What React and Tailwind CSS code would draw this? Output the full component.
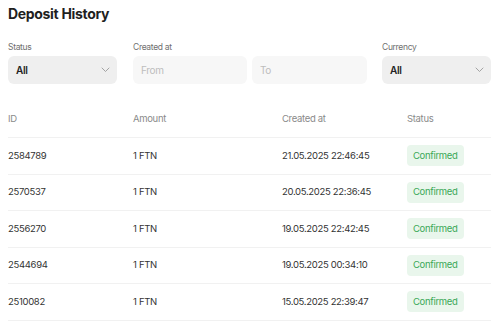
import { useState } from "react";

const rows = [
    { id: "2584789", amount: "1 FTN", created: "21.05.2025 22:46:45", status: "Confirmed" },
    { id: "2570537", amount: "1 FTN", created: "20.05.2025 22:36:45", status: "Confirmed" },
    { id: "2556270", amount: "1 FTN", created: "19.05.2025 22:42:45", status: "Confirmed" },
    { id: "2544694", amount: "1 FTN", created: "19.05.2025 00:34:10", status: "Confirmed" },
    { id: "2510082", amount: "1 FTN", created: "15.05.2025 22:39:47", status: "Confirmed" },
];

const Chevron = () => (
    <svg width="9" height="6" viewBox="0 0 9 6" fill="none" className="text-[#9a9a9a]">
        <path d="M1 1l3.5 3.5L8 1" stroke="currentColor" strokeWidth="0.9" strokeLinecap="round" strokeLinejoin="round" />
    </svg>
);

const Select = ({ label, value }) => (
    <div className="flex flex-col w-[109px]">
        <div className="h-3 mb-[3px] text-[8.5px] leading-3 text-[#6f6f6f]">{label}</div>
        <div className="flex items-center justify-between h-7 pl-2 pr-[7px] rounded-md bg-[#efefef]">
            <span className="text-[10px] font-semibold text-[#222]">{value}</span>
            <Chevron />
        </div>
    </div>
);

const DepositHistory = () => {
    const [from, setFrom] = useState("");
    const [to, setTo] = useState("");

    return (
        <div className="flex flex-col pl-2 pr-[9px] pt-1 bg-white min-h-[321px] font-['Inter',sans-serif] tracking-[-0.02em]">
            <div className="h-5 text-[14px] leading-5 font-bold text-[#1f1f1f]">Deposit History</div>

            <div className="flex mt-[17px]">
                <Select label="Status" value="All" />
                <div className="flex flex-col ml-4">
                    <div className="h-3 mb-[3px] text-[8.5px] leading-3 text-[#6f6f6f]">Created at</div>
                    <div className="flex gap-[5px]">
                        <input
                            value={from}
                            onChange={(e) => setFrom(e.target.value)}
                            placeholder="From"
                            className="h-7 w-[114px] px-2 rounded-md bg-[#f7f7f7] text-[10px] text-[#222] placeholder:text-[#bdbdbd] outline-none"
                        />
                        <input
                            value={to}
                            onChange={(e) => setTo(e.target.value)}
                            placeholder="To"
                            className="h-7 w-[115px] px-2 rounded-md bg-[#f7f7f7] text-[10px] text-[#222] placeholder:text-[#bdbdbd] outline-none"
                        />
                    </div>
                </div>
                <div className="ml-[15px]">
                    <Select label="Currency" value="All" />
                </div>
            </div>

            <div className="flex flex-col mt-[17px]">
                <div className="grid grid-cols-[125px_149px_125px_1fr] items-center h-9 text-[9.5px] text-[#8a8a8a]">
                    <div>ID</div>
                    <div>Amount</div>
                    <div>Created at</div>
                    <div>Status</div>
                </div>
                {rows.map((row) => (
                    <div
                        key={row.id}
                        className="grid grid-cols-[125px_149px_125px_1fr] items-center h-[36.5px] border-t border-[#f1f1f1] text-[9.5px] text-[#333]"
                    >
                        <div>{row.id}</div>
                        <div>{row.amount}</div>
                        <div>{row.created}</div>
                        <div>
                            <span className="inline-flex items-center h-[21px] px-[6px] rounded bg-[#e9f6ec] text-[#3aa857]">
                                {row.status}
                            </span>
                        </div>
                    </div>
                ))}
                <div className="border-t border-[#f1f1f1]" />
            </div>
        </div>
    );
};

export default DepositHistory;
